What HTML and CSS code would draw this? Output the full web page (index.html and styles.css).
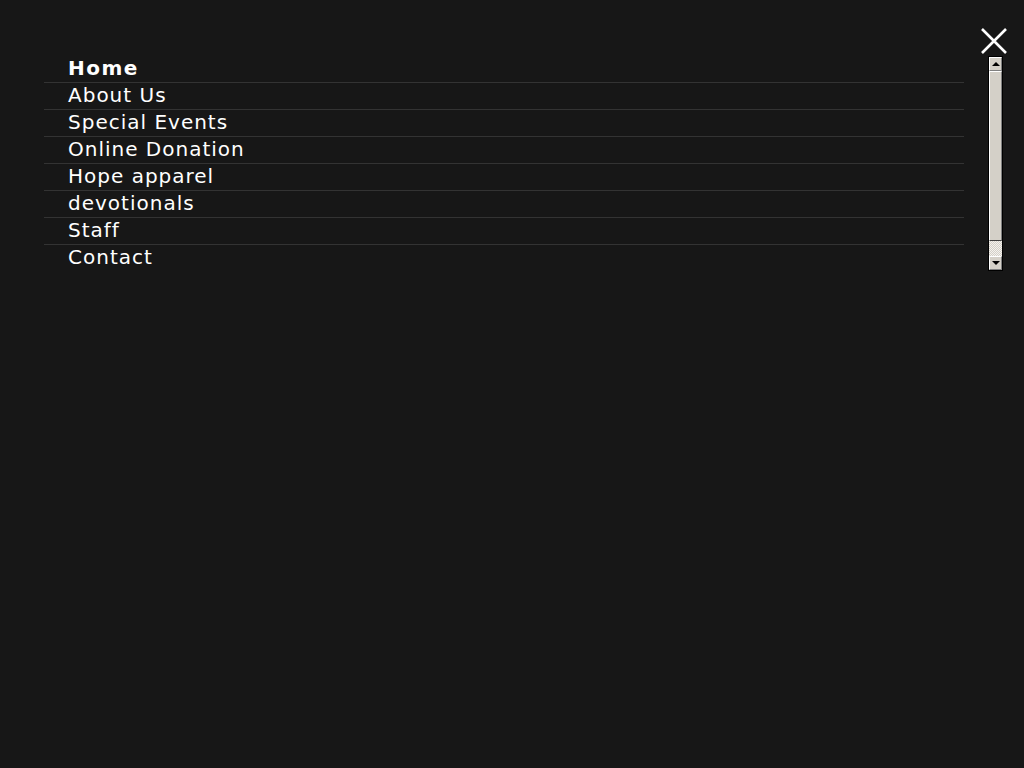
FILE: index.html
```html
<!DOCTYPE html>
<html lang="en">
<head>
    <meta charset="UTF-8">
    <title>Menu</title>
    <link rel="stylesheet" href="styles.css">
</head>
<body>
<button class="close" aria-label="Close">
    <svg width="28" height="28" viewBox="0 0 28 28">
        <path d="M2 2 L26 26 M26 2 L2 26" stroke="#fff" stroke-width="2.6" fill="none"/>
    </svg>
</button>

<div class="panel">
    <ul class="menu">
        <li class="active">Home</li>
        <li>About Us</li>
        <li>Special Events</li>
        <li>Online Donation</li>
        <li>Hope apparel</li>
        <li>devotionals</li>
        <li>Staff</li>
        <li>Contact</li>
    </ul>

    <!-- fake scrollbar -->
    <div class="scrollbar">
        <div class="sb-btn"><span class="arrow up"></span></div>
        <div class="sb-thumb"></div>
        <div class="sb-track"></div>
        <div class="sb-btn"><span class="arrow down"></span></div>
    </div>
</div>
</body>
</html>
```

FILE: styles.css
```css
* {
    box-sizing: border-box;
    margin: 0;
    padding: 0;
}

body {
    background-color: #171717;
    font-family: "DejaVu Sans", sans-serif;
    color: #fff;
    min-height: 100vh;
    padding: 56px 0 0 44px;
}

.close {
    position: absolute;
    top: 27px;
    right: 16px;
    width: 28px;
    height: 28px;
    background: none;
    border: none;
    cursor: pointer;
}

.close svg {
    display: block;
}

.panel {
    display: flex;
    gap: 24px;
}

.menu {
    list-style: none;
    width: 920px;
}

.menu li {
    font-size: 20px;
    line-height: 24px;
    letter-spacing: 1px;
    padding: 0 0 2px 24px;
    border-bottom: 1px solid #333;
}

.menu li:last-child {
    border-bottom: none;
}

.menu li.active {
    font-weight: bold;
    letter-spacing: 1.5px;
}

.scrollbar {
    width: 15px;
    height: 215px;
    display: flex;
    flex-direction: column;
    background-color: #d4d0c8;
    border: 1px solid #000;
}

.sb-btn {
    height: 14px;
    background-color: #d4d0c8;
    border-top: 1px solid #fff;
    border-left: 1px solid #fff;
    border-right: 1px solid #808080;
    border-bottom: 1px solid #808080;
    display: flex;
    align-items: center;
    justify-content: center;
}

.arrow {
    width: 0;
    height: 0;
    border-left: 4px solid transparent;
    border-right: 4px solid transparent;
}

.arrow.up {
    border-bottom: 4px solid #000;
}

.arrow.down {
    border-top: 4px solid #000;
}

.sb-thumb {
    flex: 1;
    background-color: #d4d0c8;
    border-top: 1px solid #fff;
    border-left: 1px solid #fff;
    border-right: 1px solid #808080;
    border-bottom: 1px solid #404040;
}

.sb-track {
    height: 15px;
    background-color: #e8e6e2;
    background-image: repeating-conic-gradient(#d4d0c8 0 25%, #f4f2ee 0 50%);
    background-size: 2px 2px;
}
```
